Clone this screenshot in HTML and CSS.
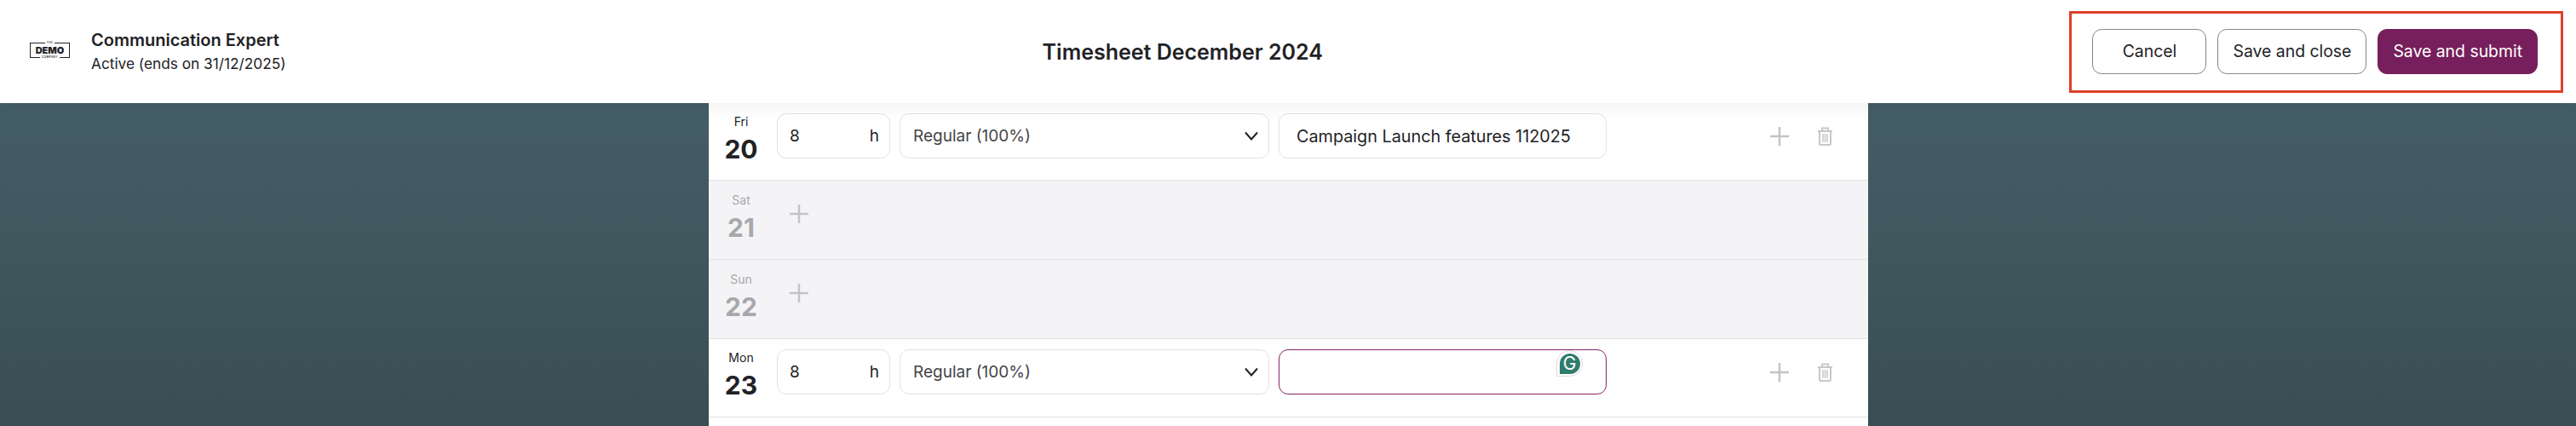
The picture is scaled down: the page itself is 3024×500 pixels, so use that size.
FILE: index.html
```html
<!DOCTYPE html>
<html lang="en">
<head>
  <meta charset="UTF-8" />
  <title>Timesheet December 2024</title>
  <link rel="stylesheet" href="styles.css">
</head>
<body>
  <header class="topbar">
    <div class="contract">
      <div class="logo">
        <span class="logo-small">THE</span>
        <span class="logo-name">DEMO</span>
        <span class="logo-small">COMPANY</span>
      </div>
      <div class="contract-text">
        <div class="contract-name">Communication Expert</div>
        <div class="contract-status">Active (ends on 31/12/2025)</div>
      </div>
    </div>
    <h1>Timesheet December 2024</h1>
    <div class="buttons">
      <button class="btn">Cancel</button>
      <button class="btn">Save and close</button>
      <button class="btn primary">Save and submit</button>
    </div>
  </header>

  <main class="sheet">
    <div class="day first">
      <div class="date"><span class="weekday">Fri</span><span class="num">20</span></div>
      <div class="hours"><input type="text" value="8" /><span>h</span></div>
      <div class="type">
        <span>Regular (100%)</span>
        <svg viewBox="0 0 16 11"><path d="M1 1.500 8 9.500 15 1.500" /></svg>
      </div>
      <input class="note" type="text" value="Campaign Launch features 112025" />
      <div class="actions">
        <svg class="plus" viewBox="0 0 22 22"><path d="M11 0V22M0 11H22" /></svg>
        <svg class="trash" viewBox="0 0 19 22"><path d="M1 5H18M6 5V1.500H13V5M3 5V20A1 1 0 0 0 4 21H15A1 1 0 0 0 16 20V5" /><path class="trash-bars" d="M7 8V18M9.500 8V18M12 8V18" /></svg>
      </div>
    </div>

    <div class="day off">
      <div class="date"><span class="weekday">Sat</span><span class="num">21</span></div>
      <svg class="plus add" viewBox="0 0 22 22"><path d="M11 0V22M0 11H22" /></svg>
    </div>

    <div class="day off">
      <div class="date"><span class="weekday">Sun</span><span class="num">22</span></div>
      <svg class="plus add" viewBox="0 0 22 22"><path d="M11 0V22M0 11H22" /></svg>
    </div>

    <div class="day">
      <div class="date"><span class="weekday">Mon</span><span class="num">23</span></div>
      <div class="hours"><input type="text" value="8" /><span>h</span></div>
      <div class="type">
        <span>Regular (100%)</span>
        <svg viewBox="0 0 16 11"><path d="M1 1.500 8 9.500 15 1.500" /></svg>
      </div>
      <div class="note-wrap">
        <input class="note focused" type="text" value="" />
        <span class="grammarly"><span>G</span></span>
      </div>
      <div class="actions">
        <svg class="plus" viewBox="0 0 22 22"><path d="M11 0V22M0 11H22" /></svg>
        <svg class="trash" viewBox="0 0 19 22"><path d="M1 5H18M6 5V1.500H13V5M3 5V20A1 1 0 0 0 4 21H15A1 1 0 0 0 16 20V5" /><path class="trash-bars" d="M7 8V18M9.500 8V18M12 8V18" /></svg>
      </div>
    </div>
  </main>
</body>
</html>
```

FILE: styles.css
```css
* { box-sizing: border-box; }
body { margin: 0; height: 500px; overflow: hidden; font-family: Inter, "Noto Sans", sans-serif; color: #222226; background: linear-gradient(#48636b, #394e54); }

/* top bar */
.topbar { position: relative; z-index: 1; display: flex; justify-content: space-between; align-items: center; height: 121px; padding: 0 15px 0 35px; background: #fff; box-shadow: 0 4px 20px rgba(0,0,0,0.07); }
.contract { display: flex; align-items: center; gap: 25px; min-width: 312px; }
.logo { display: flex; flex-direction: column; align-items: center; justify-content: space-between; width: 47px; height: 18px; margin-top: -4px; border: 1px solid #222; }
.logo-small { margin: -1px 0; font-size: 3px; line-height: 1px; letter-spacing: 0.5px; background: #fff; padding: 0 2px; font-weight: 600; }
.logo-name { font-size: 11px; line-height: 12px; font-weight: 900; }
.contract-name { font-size: 20px; line-height: 27px; font-weight: 600; }
.contract-status { font-size: 17.250px; line-height: 27px; }
h1 { margin: 0; font-size: 25px; font-weight: 600; }
.buttons { display: flex; gap: 13px; padding: 18px 27px 19px 24px; border: 3px solid #dd4028; }
.btn { min-width: 134px; height: 53px; padding: 0 17px; font: 19.400px Inter, "Noto Sans", sans-serif; color: #222226; background: #fff; border: 1px solid #86868c; border-radius: 11px; }
.btn.primary { color: #fff; background: #761f5c; border-color: #761f5c; }

/* days */
.sheet { width: 1361px; height: 379px; margin-left: 832px; background: #fff; }
.day { display: flex; align-items: flex-start; height: 93px; padding-top: 12px; padding-right: 41px; background: #fff; border-bottom: 1px solid #e2e2e6; }
.day.first { height: 91px; }
.day:last-child { height: 92px; }
.day.off { padding-top: 13px; background: #f4f4f6; color: #a8a8ac; }
.date { display: flex; flex-direction: column; align-items: center; width: 76px; margin-right: 4px; }
.weekday { font-size: 14px; line-height: 20px; }
.num { margin-top: 4px; font-size: 30px; line-height: 36px; font-weight: 700; }
.hours { display: flex; align-items: center; width: 133px; height: 53px; padding: 0 12px 0 14px; margin-right: 11px; font-size: 19px; border: 1px solid #e2e2e6; border-radius: 11px; }
.hours input { flex: 1; width: 50px; padding: 0; border: none; outline: none; font: 19px Inter, "Noto Sans", sans-serif; color: #222226; background: transparent; }
.type { display: flex; justify-content: space-between; align-items: center; width: 434px; height: 53px; padding: 0 12px 0 15px; margin-right: 11px; font-size: 19px; color: #444448; border: 1px solid #e2e2e6; border-radius: 11px; }
.type svg { width: 16px; height: 11px; fill: none; stroke: #222226; stroke-width: 2; }
.note { width: 385px; height: 53px; padding: 0 20px; font: 19.800px Inter, "Noto Sans", sans-serif; color: #222226; background: #fff; border: 1px solid #e2e2e6; border-radius: 11px; outline: none; }
.note.focused { border: 1.500px solid #85246b; }
.note-wrap { position: relative; display: flex; }
.grammarly { position: absolute; top: 1px; left: 326px; display: flex; align-items: center; justify-content: center; width: 31px; height: 31px; background: #fff; border: 1px solid #dcdce0; border-radius: 50% 50% 50% 0; }
.grammarly span { display: flex; align-items: center; justify-content: center; width: 24px; height: 24px; color: #fff; font-size: 21px; font-weight: 400; background: #2f7d6d; border-radius: 50% 50% 50% 0; }
.actions { display: flex; align-items: center; gap: 33px; height: 53px; margin-left: auto; }
.plus { width: 22px; height: 22px; fill: none; stroke: #c4c4c8; stroke-width: 2.500; }
.plus.add { margin: 15px 0 0 15px; }
.trash { width: 19px; height: 22px; fill: none; stroke: #c8c8cc; stroke-width: 2; }
.trash-bars { stroke-width: 1.500; }
```
